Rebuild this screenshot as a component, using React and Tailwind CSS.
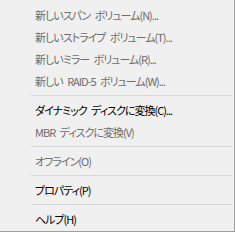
const items = [
  { label: "新しいスパン ボリューム(N)...", disabled: true },
  { label: "新しいストライプ ボリューム(T)...", disabled: true },
  { label: "新しいミラー ボリューム(R)...", disabled: true },
  { label: "新しい RAID-5 ボリューム(W)...", disabled: true },
  { sep: true },
  { label: "ダイナミック ディスクに変換(C)..." },
  { label: "MBR ディスクに変換(V)", disabled: true },
  { sep: true },
  { label: "オフライン(O)", disabled: true },
  { sep: true },
  { label: "プロパティ(P)" },
  { sep: true },
  { label: "ヘルプ(H)" },
];

const App = () => {
  return (
    <div
      className="w-[235px] h-[232px] bg-[#f0f0f0] border-r border-b border-[#a0a0a0] pt-[4px] text-[11px] tracking-[-1px] [word-spacing:3px] leading-none"
      style={{ fontFamily: '"Noto Sans CJK JP", "Noto Sans", sans-serif', fontFeatureSettings: '"palt"' }}
    >
      {items.map((it, i) =>
        it.sep ? (
          <div key={i} className="h-[7px] flex items-center pl-[31px] pr-[2px]">
            <div className="w-full h-px bg-[#d7d7d7]" />
          </div>
        ) : (
          <div
            key={i}
            className={
              "h-[22px] flex items-center pl-[35px] " +
              (it.disabled ? "text-[#6d6d6d]" : "text-black")
            }
          >
            {it.label}
          </div>
        )
      )}
    </div>
  );
};

export default App;
